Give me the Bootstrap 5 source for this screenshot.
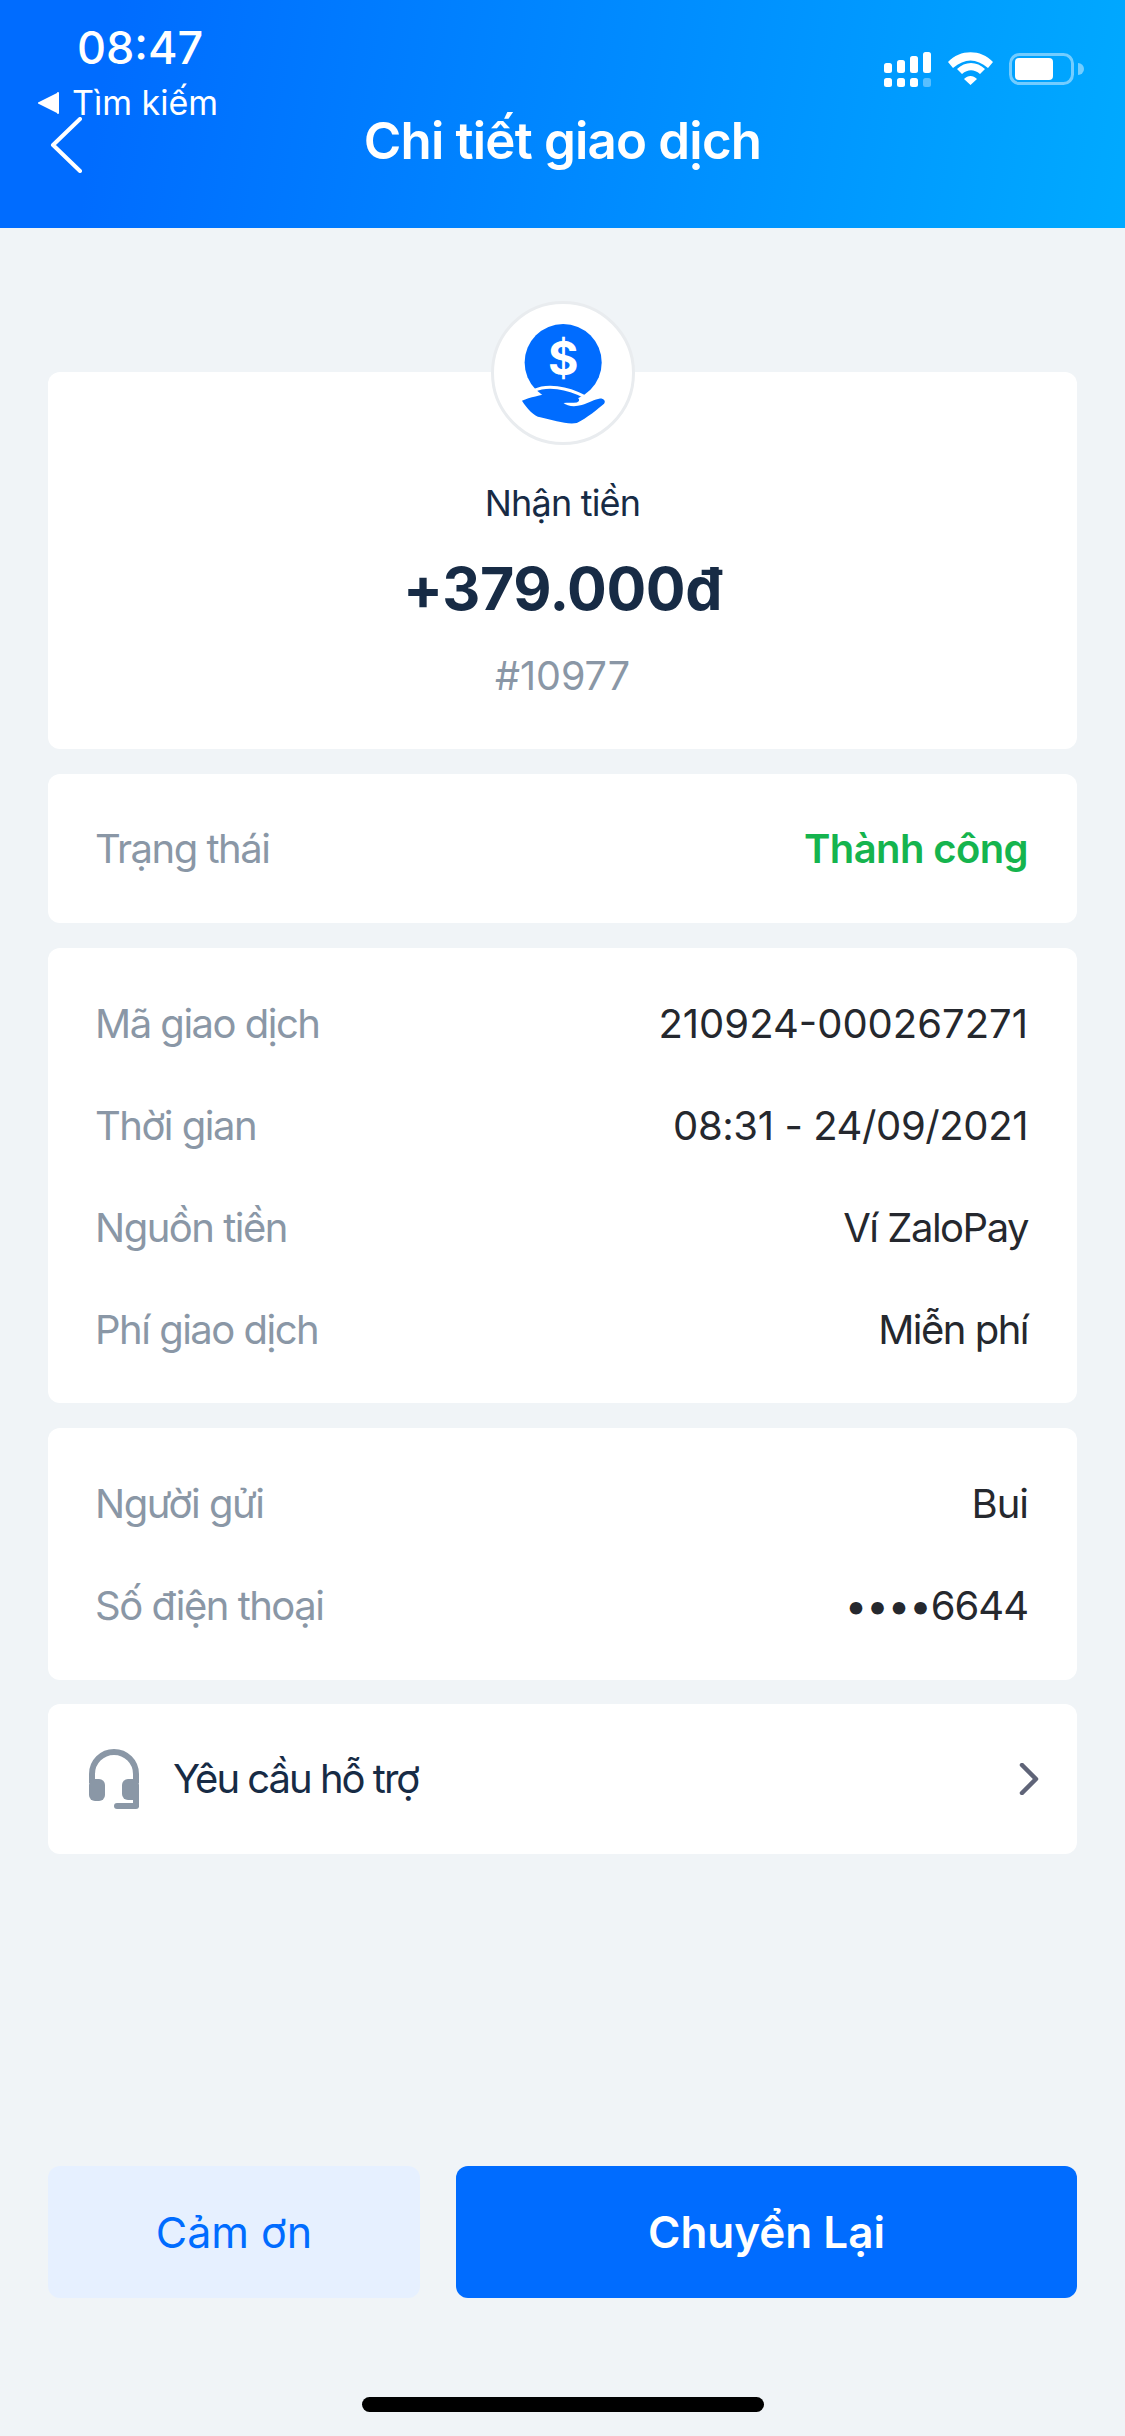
<!DOCTYPE html>
<html lang="en">
<head>
    <meta charset="UTF-8">
    <meta name="viewport" content="width=device-width, initial-scale=1.0">
    <title>Chi tiết giao dịch</title>
    <link rel="stylesheet" href="https://cdn.jsdelivr.net/npm/bootstrap@5.3.0/dist/css/bootstrap.min.css">
    <style>
        body { background: #f0f4f7; font-family: Inter, "Liberation Sans", sans-serif; color: #172b45; overflow: hidden; }
        .screen { width: 1125px; height: 2436px; }
        .top-head { height: 228px; background: linear-gradient(100deg, #006cff 10%, #00aaff 100%); color: #fff; }
        .head-side { width: 250px; }
        .clock { margin: 22px 0 0 77px; font-size: 45px; line-height: 52px; font-weight: 500; }
        .back-label { margin: 9px 0 0 37px; font-size: 34px; line-height: 40px; gap: 12px; }
        .back-icon { display: block; margin: -6px 0 0 50px; }
        .head-title { font-size: 51px; font-weight: 600; line-height: 60px; padding-top: 111px; letter-spacing: -.8px; }
        .status-icons { margin-top: 50px; margin-left: 7px; }
        .page-body { padding: 0 48px; }
        .pane { background: #fff; border-radius: 12px; margin-bottom: 25px; }
        .pane-amount { margin-top: 144px; height: 377px; position: relative; padding-top: 109px; text-align: center; }
        .coin-ring { position: absolute; left: 443px; top: -71px; width: 144px; height: 144px; border-radius: 50%; background: #fff; border: 3px solid #e9ecef; }
        .amount-label { font-size: 36px; line-height: 44px; letter-spacing: -.8px; }
        .amount-value { font-size: 59px; line-height: 70px; font-weight: 700; margin-top: 29px; letter-spacing: -.4px; }
        .amount-ref { font-size: 39.5px; line-height: 44px; color: #8a97a6; margin-top: 30px; }
        .info-row { height: 102px; padding: 0 49px 0 47px; font-size: 40px; }
        .info-label { color: #8a97a6; letter-spacing: -1.5px; }
        .info-value { color: #25282e; }
        .info-text { letter-spacing: -1.5px; }
        .info-date { letter-spacing: -.4px; }
        .info-dots { letter-spacing: -1px; }
        .info-ok { color: #15b44e; font-weight: 600; letter-spacing: -.6px; }
        .pane-list { padding: 25px 0 22px; }
        .pane-single { height: 149px; }
        .pane-short { padding-bottom: 23px; margin-bottom: 24px; }
        .pane-help { height: 150px; padding: 0 38px 0 41px; font-size: 40px; letter-spacing: -2px; gap: 34px; }
        .foot-area { padding: 0 48px; height: 270px; }
        .btn-thanks, .btn-again { height: 132px; border: 0; border-radius: 12px; font-size: 43px; }
        .btn-thanks { width: 372px; background: #e6f0ff; color: #006cff; }
        .btn-again { width: 621px; background: #006cff; color: #fff; font-weight: 600; font-size: 44px; }
        .btn-thanks:hover { background: #e6f0ff; color: #006cff; }
        .btn-again:hover { background: #006cff; color: #fff; }
        .foot-btns { gap: 36px; }
        .home-bar { margin: 99px 0 0 314px; width: 402px; height: 15px; border-radius: 8px; background: #000; }
    </style>
</head>
<body>
    <div class="screen d-flex flex-column">
        <div class="top-head d-flex">
            <div class="head-side flex-shrink-0">
                <div class="clock">08:47</div>
                <div class="back-label d-flex align-items-center">
                    <svg width="23" height="22" viewBox="0 0 23 22"><path d="M22 1v20a1 1 0 0 1-2 0L2 12a1 1 0 0 1 0-2L20 1a1 1 0 0 1 2 0z" fill="#fff"/></svg>
                    <span>Tìm kiếm</span>
                </div>
                <svg class="back-icon" width="34" height="56" viewBox="0 0 34 56"><path d="M30 2 3 28l27 26" fill="none" stroke="#fff" stroke-width="4" stroke-linecap="round" stroke-linejoin="round"/></svg>
            </div>
            <div class="head-title flex-grow-1 text-center">Chi tiết giao dịch</div>
            <div class="head-side flex-shrink-0">
                <svg class="status-icons" width="204" height="40" viewBox="0 0 204 40">
                    <g fill="#fff">
                        <rect x="2" y="13" width="8" height="10" rx="2.5"/><rect x="15" y="10" width="8" height="13" rx="2.5"/><rect x="28" y="6" width="8" height="17" rx="2.5"/><rect x="41" y="2" width="8" height="21" rx="2.5"/>
                        <rect x="2" y="28" width="8" height="9" rx="2.5"/><rect x="15" y="28" width="8" height="9" rx="2.5"/><rect x="28" y="28" width="8" height="9" rx="2.5"/><rect x="41" y="28" width="8" height="9" rx="2.5" opacity=".35"/>
                        <path d="M66 12C78-1 99-1 111 12l-5 6C94 8 83 8 71 18zM75 19c8-8 20-8 28 0l-5 5c-6-5-12-5-18 0zM82 29c4-4 9-4 13 0l-6.500 6z"/>
                        <rect x="133" y="8" width="38" height="22" rx="4"/>
                        <path d="M196 13a6 6 0 0 1 0 12z" opacity=".45"/>
                    </g>
                    <rect x="128.500" y="4.500" width="62" height="29" rx="9" fill="none" stroke="#fff" stroke-opacity=".45" stroke-width="3"/>
                </svg>
            </div>
        </div>
        <div class="page-body flex-grow-1">
            <div class="pane pane-amount">
                <div class="coin-ring d-flex align-items-center justify-content-center">
                    <svg width="87" height="103" viewBox="420 120 260 310">
                        <circle cx="549" cy="242" r="116" fill="#006cff"/>
                        <text x="549" y="279" text-anchor="middle" font-family="Inter" font-weight="700" font-size="140" fill="#fff">$</text>
                        <path d="M425 357C450 345 480 342 510 332C540 328 570 338 592 348C600 352 598 360 590 362C578 364 562 362 550 364C560 374 585 376 605 370C625 364 645 352 660 350C672 350 678 358 672 366C655 380 620 410 590 424C560 430 520 415 480 407C462 405 440 380 425 357Z" fill="#006cff"/>
                        <path d="M462 326C500 308 560 316 612 344" fill="none" stroke="#fff" stroke-width="9"/>
                    </svg>
                </div>
                <div class="amount-label">Nhận tiền</div>
                <div class="amount-value">+379.000đ</div>
                <div class="amount-ref">#10977</div>
            </div>
            <div class="pane pane-single info-row d-flex align-items-center justify-content-between">
                <span class="info-label">Trạng thái</span><span class="info-ok">Thành công</span>
            </div>
            <div class="pane pane-list">
                <div class="info-row d-flex align-items-center justify-content-between"><span class="info-label">Mã giao dịch</span><span class="info-value">210924-000267271</span></div>
                <div class="info-row d-flex align-items-center justify-content-between"><span class="info-label">Thời gian</span><span class="info-value info-date">08:31 - 24/09/2021</span></div>
                <div class="info-row d-flex align-items-center justify-content-between"><span class="info-label">Nguồn tiền</span><span class="info-value info-text">Ví ZaloPay</span></div>
                <div class="info-row d-flex align-items-center justify-content-between"><span class="info-label">Phí giao dịch</span><span class="info-value info-text">Miễn phí</span></div>
            </div>
            <div class="pane pane-list pane-short">
                <div class="info-row d-flex align-items-center justify-content-between"><span class="info-label">Người gửi</span><span class="info-value info-dots">Bui</span></div>
                <div class="info-row d-flex align-items-center justify-content-between"><span class="info-label">Số điện thoại</span><span class="info-value info-dots">••••6644</span></div>
            </div>
            <div class="pane pane-help d-flex align-items-center">
                <svg width="50" height="60" viewBox="0 0 50 60" class="flex-shrink-0">
                    <path d="M3 34V25a22 22 0 0 1 44 0v9" fill="none" stroke="#8a97a6" stroke-width="6"/>
                    <rect x="0" y="30" width="16" height="22" rx="6" fill="#8a97a6"/>
                    <rect x="33" y="30" width="17" height="21" rx="6" fill="#8a97a6"/>
                    <rect x="44" y="40" width="6" height="18" fill="#8a97a6"/>
                    <rect x="25" y="54" width="25" height="6" rx="3" fill="#8a97a6"/>
                </svg>
                <span class="flex-grow-1">Yêu cầu hỗ trợ</span>
                <svg width="20" height="32" viewBox="0 0 20 32"><path d="M3 2l14 14L3 30" fill="none" stroke="#5f6478" stroke-width="4.500" stroke-linecap="round" stroke-linejoin="round"/></svg>
            </div>
        </div>
        <div class="foot-area flex-shrink-0">
            <div class="foot-btns d-flex">
                <button class="btn btn-thanks" type="button">Cảm ơn</button>
                <button class="btn btn-again" type="button">Chuyển Lại</button>
            </div>
            <div class="home-bar"></div>
        </div>
    </div>
    <script src="https://cdn.jsdelivr.net/npm/bootstrap@5.3.0/dist/js/bootstrap.bundle.min.js"></script>
</body>
</html>
